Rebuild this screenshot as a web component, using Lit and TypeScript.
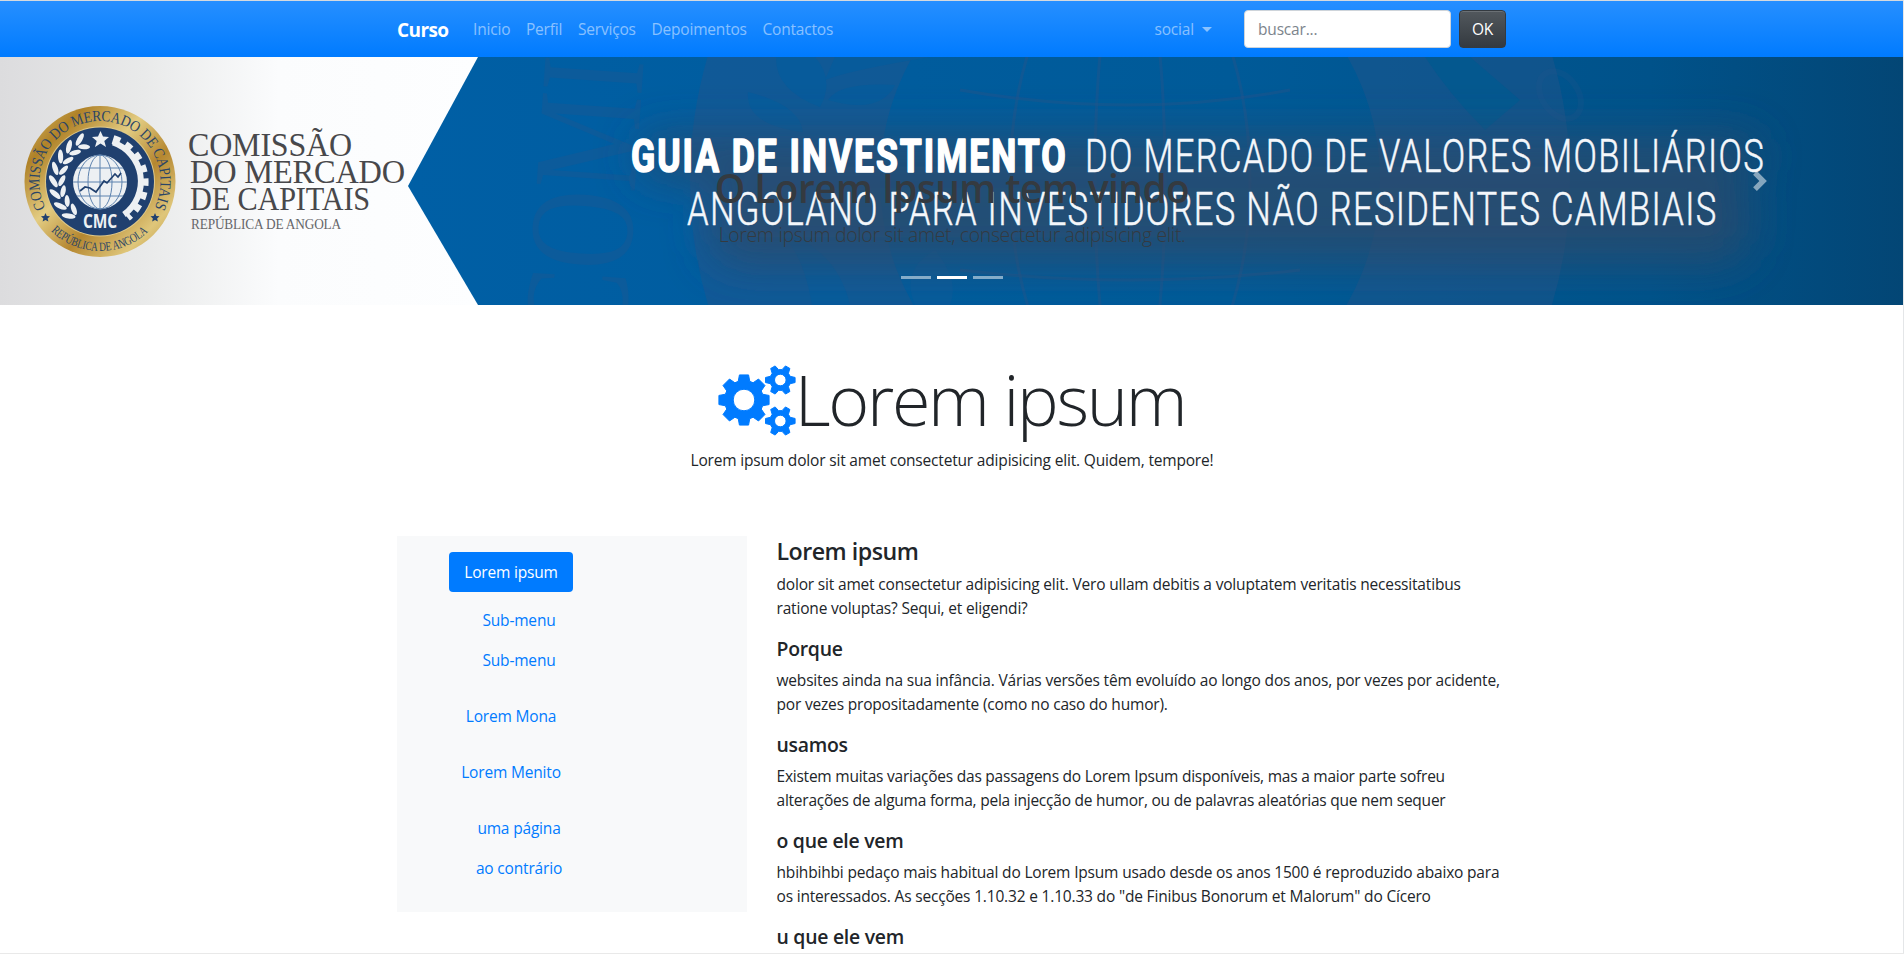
import { LitElement, html, css, svg } from "lit";
import { customElement } from "lit/decorators.js";

const links = ["Inicio", "Perfil", "Serviços", "Depoimentos", "Contactos"];

const sections = [
  { big: true, title: "Lorem ipsum", lines: ["dolor sit amet consectetur adipisicing elit. Vero ullam debitis a voluptatem veritatis necessitatibus", "ratione voluptas? Sequi, et eligendi?"] },
  { title: "Porque", lines: ["websites ainda na sua infância. Várias versões têm evoluído ao longo dos anos, por vezes por acidente,", "por vezes propositadamente (como no caso do humor)."] },
  { title: "usamos", tight: true, lines: ["Existem muitas variações das passagens do Lorem Ipsum disponíveis, mas a maior parte sofreu", "alterações de alguma forma, pela injecção de humor, ou de palavras aleatórias que nem sequer"] },
  { title: "o que ele vem", lines: ["hbihbihbi pedaço mais habitual do Lorem Ipsum usado desde os anos 1500 é reproduzido abaixo para", "os interessados. As secções 1.10.32 e 1.10.33 do \"de Finibus Bonorum et Malorum\" do Cícero"] },
  { title: "u que ele vem", lines: [] },
];

function gear(cx: number, cy: number, r: number, teeth: number, root: number, hole: number, half: number, tip: number) {
  let d = "";
  for (let i = 0; i < teeth; i++) {
    const a = (i * 2 * Math.PI) / teeth;
    const pts = [[root, -half], [r, -tip], [r, tip], [root, half]];
    for (const [rad, o] of pts) {
      d += `${d ? "L" : "M"}${(cx + rad * Math.cos(a + o)).toFixed(2)} ${(cy + rad * Math.sin(a + o)).toFixed(2)}`;
    }
  }
  d += `ZM${cx + hole} ${cy}A${hole} ${hole} 0 1 0 ${cx - hole} ${cy}A${hole} ${hole} 0 1 0 ${cx + hole} ${cy}Z`;
  return svg`<path fill-rule="evenodd" stroke="#007bff" stroke-width="1" stroke-linejoin="round" d=${d} />`;
}

const leaves = Array.from({ length: 8 }, (_, i) => -52 + i * 16);

@customElement("site-banner")
class SiteBanner extends LitElement {
  static styles = css`
    :host { display: block; height: 248px; position: relative; overflow: hidden; }
    .art { display: block; width: 1904px; height: 248px; }
    .serif { font-family: "Liberation Serif", serif; }
    .sans { font-family: "Open Sans", sans-serif; }
    .headline { font-family: "Roboto", sans-serif; font-weight: 300; font-size: 45.5px; fill: #f4f7fb; stroke: #f4f7fb; stroke-width: 0.5; stroke-linejoin: round; }
    .strong { font-weight: 700; fill: #fff; stroke: #fff; stroke-width: 1.6; }
    .ring { font-family: "Liberation Serif", serif; font-size: 15.5px; fill: #2b4566; }
    .small { font-size: 12.5px; }
    .caption { position: absolute; left: 0; right: 0; top: 107px; text-align: center; color: #343a40; }
    .caption-title { margin: 0 0 8px; font-weight: 600; font-size: 38.8px; line-height: 48px; letter-spacing: -0.55px; }
    .caption-text { margin: 0; font-weight: 300; font-size: 19.4px; line-height: 30px; letter-spacing: -0.32px; }
    .dots { position: absolute; left: 0; right: 0; bottom: 26px; display: flex; justify-content: center; gap: 6px; }
    .dot { width: 30px; height: 3px; background: #fff; opacity: 0.5; }
    .active { opacity: 1; }
    .next { position: absolute; left: 1750px; top: 114px; width: 20px; height: 20px; opacity: 0.5; }
  `;
  render() {
    return html`
      <svg class="art" viewBox="0 57 1904 248">
        <defs>
          <linearGradient id="gray"><stop offset="0" stop-color="#dcdcde" /><stop offset=".3" stop-color="#e9eaea" /><stop offset=".58" stop-color="#fbfcfd" /><stop offset="1" stop-color="#fdfeff" /></linearGradient>
          <linearGradient id="blue"><stop offset="0" stop-color="#005fa5" /><stop offset=".55" stop-color="#005a98" /><stop offset=".83" stop-color="#00528a" /><stop offset="1" stop-color="#034675" /></linearGradient>
          <linearGradient id="gold" x1="0" y1="0" x2="1" y2="1"><stop offset="0" stop-color="#dcc477" /><stop offset=".2" stop-color="#b08228" /><stop offset=".42" stop-color="#e3cc82" /><stop offset=".62" stop-color="#b58730" /><stop offset=".82" stop-color="#dfc67a" /><stop offset="1" stop-color="#b8913a" /></linearGradient>
          <filter id="soft" x="-20%" y="-80%" width="140%" height="260%"><feGaussianBlur stdDeviation="22" /></filter>
          <path id="arcTop" d="M45.6 208A60.5 60.5 0 1 1 154.4 208" />
          <path id="arcBottom" d="M51 231A70 70 0 0 0 149 231" />
          <clipPath id="field"><path d="M478 57H1904V305H478L408 186Z" /></clipPath>
        </defs>
        <rect y="57" width="480" height="248" fill="url(#gray)" />
        <path d="M478 57H1904V305H478L408 186Z" fill="url(#blue)" />
        <g clip-path="url(#field)">
          <g fill="none" stroke="#29558a" stroke-opacity=".38">
            <circle cx="1130" cy="180" r="345" stroke-width="190" />
            <ellipse cx="1130" cy="180" rx="120" ry="240" stroke-width="3" />
            <ellipse cx="1130" cy="180" rx="35" ry="240" stroke-width="3" />
            <path d="M960 90Q1130 120 1290 90M960 270Q1130 290 1300 270" stroke-width="3" />
            <ellipse cx="1560" cy="95" rx="18" ry="26" transform="rotate(-35 1560 95)" stroke-width="6" stroke-opacity=".2" />
          </g>
          <text class="serif" transform="translate(624 345) rotate(-86)" font-size="150" fill="#29558a" fill-opacity=".3" textLength="285" lengthAdjust="spacingAndGlyphs">COMI</text>
          <g fill="#075b9b">
            <path d="M776 57Q775 90 820 107Q835 80 815 57ZM748 92Q745 125 803 132Q800 105 748 92ZM828 100Q840 82 895 85Q880 115 828 100ZM825 80Q850 70 930 57H835Z" />
            <path d="M1425 57Q1450 95 1485 130L1520 100L1470 57Z" fill="#04588f" />
            <path d="M760 225Q800 232 812 305H850Q835 240 760 225ZM935 250Q900 270 915 305H950Q960 280 935 250Z" />
          </g>
          <g filter="url(#soft)" fill="#2b4a6b" fill-opacity=".8">
            <rect x="640" y="136" width="1120" height="42" rx="20" />
            <rect x="710" y="180" width="1040" height="84" rx="30" />
          </g>
        </g>
        <circle cx="100" cy="181.5" r="75.5" fill="url(#gold)" />
        <circle cx="100" cy="181.5" r="55" fill="#dfc98a" />
        <circle cx="100" cy="181.5" r="54" fill="#20406f" />
        <text class="ring"><textPath href="#arcTop" textLength="244" lengthAdjust="spacingAndGlyphs">COMISSÃO DO MERCADO DE CAPITAIS</textPath></text>
        <text class="ring small"><textPath href="#arcBottom" textLength="107" lengthAdjust="spacingAndGlyphs">REPÚBLICA DE ANGOLA</textPath></text>
        <g fill="#20406f"><path d="M45.500 213l1.300 3 3.200.200-2.400 2.200.800 3.200-2.900-1.700-2.900 1.700.800-3.200-2.400-2.200 3.200-.200z" /><path d="M155 213l1.300 3 3.200.200-2.400 2.200.800 3.200-2.900-1.700-2.900 1.700.800-3.200-2.400-2.200 3.200-.200z" /></g>
        <g fill="#edf0f3">
          ${leaves.map((a) => svg`<g transform=${`rotate(${a} 100 181.5)`}><ellipse cx="53.500" cy="178" rx="2.600" ry="7" transform="rotate(-30 53.500 178)" /><ellipse cx="62" cy="178" rx="2.500" ry="6" transform="rotate(32 62 178)" /></g>`)}
          <path d="M100.500 131l2.500 5.600 6 .400-4.700 4 1.700 6-5.500-3.400-5.500 3.400 1.700-6-4.700-4 6-.400z" />
          <circle cx="100" cy="182" r="27" />
        </g>
        <g fill="none" stroke="#edf0f3">
          <path d="M113 142.500A41 41 0 0 1 124 214.500" stroke-width="6" />
          <path d="M113 139.500A44.500 44.500 0 0 1 127 217" stroke-width="9" stroke-dasharray="7 6.200" />
        </g>
        <g fill="none" stroke="#5d82ae" stroke-width="1">
          <path d="M100 155V209M73 182H127M77 168H123M77 196H123" /><ellipse cx="100" cy="182" rx="12" ry="27" /><ellipse cx="100" cy="182" rx="22" ry="27" />
          <path d="M80 191l5-4 5 1 6 4 8-11 3 2 8-9 3 3 3-4" stroke="#20406f" stroke-width="1.700" />
        </g>
        <text class="sans" x="83" y="228" font-size="20" font-weight="700" fill="#edf0f3" textLength="34" lengthAdjust="spacingAndGlyphs">CMC</text>
        <g class="serif" fill="#48484b">
          <text x="188" y="155.500" font-size="34.500" textLength="164" lengthAdjust="spacingAndGlyphs">COMISSÃO</text>
          <text x="190" y="182.500" font-size="34" textLength="215" lengthAdjust="spacingAndGlyphs">DO MERCADO</text>
          <text x="190" y="209.500" font-size="34" textLength="180" lengthAdjust="spacingAndGlyphs">DE CAPITAIS</text>
          <text x="191" y="229" font-size="15" fill="#66666a" textLength="150" lengthAdjust="spacingAndGlyphs">REPÚBLICA DE ANGOLA</text>
        </g>
        <text class="headline strong" transform="translate(631 171.500) scale(.78 1)" textLength="557">GUIA DE INVESTIMENTO</text>
        <text class="headline" transform="translate(1085 171.500) scale(.76 1)" textLength="893">DO MERCADO DE VALORES MOBILIÁRIOS</text>
        <text class="headline" transform="translate(687 225) scale(.76 1)" textLength="1354">ANGOLANO PARA INVESTIDORES NÃO RESIDENTES CAMBIAIS</text>
      </svg>
      <div class="caption">
        <h3 class="caption-title">O Lorem Ipsum tem vindo</h3>
        <p class="caption-text">Lorem ipsum dolor sit amet, consectetur adipisicing elit.</p>
      </div>
      <div class="dots"><i class="dot"></i><i class="dot active"></i><i class="dot"></i></div>
      <svg class="next" viewBox="0 0 8 8"><path fill="#fff" d="M2.750 0l-1.500 1.500 2.500 2.500-2.500 2.500 1.500 1.500 4-4-4-4z" /></svg>
    `;
  }
}

@customElement("app-root")
class AppRoot extends LitElement {
  static styles = css`
    :host { display: block; height: 954px; overflow: hidden; position: relative; background: #fff; color: #212529; font: 15.5px/24px "Open Sans", "Noto Sans", sans-serif; letter-spacing: -0.18px; box-sizing: border-box; }
    .nav { height: 57px; box-sizing: border-box; border-top: 1px solid #d5dade; background: linear-gradient(#268fff, #007bff); }
    .inner { width: 1109px; display: flex; align-items: center; height: 56px; }
    .nav .inner, .cols { margin-left: 397px; }
    .brand { font-size: 19px; font-weight: 700; color: #fff; width: 68px; letter-spacing: -0.6px; padding-top: 1px; }
    .links { display: flex; gap: 15.7px; color: rgba(255, 255, 255, 0.5); padding-left: 8px; letter-spacing: -0.19px; }
    .social { margin-left: auto; color: rgba(255, 255, 255, 0.5); display: flex; align-items: center; gap: 8px; margin-right: 32px; }
    .caret { border: 5px solid transparent; border-top-color: currentColor; border-bottom: 0; }
    .search { box-sizing: border-box; width: 207px; height: 38px; border: 1px solid #ced4da; border-radius: 4px; background: #fff; color: #7c848c; padding: 6px 13px; }
    .ok { box-sizing: border-box; width: 47px; height: 38px; margin-left: 8px; border: 1px solid #343a40; border-radius: 4px; background: linear-gradient(#52585d, #343a40); box-shadow: inset 0 1px 0 rgba(255, 255, 255, 0.15); color: #fff; text-align: center; line-height: 36px; }
    .hero { display: flex; flex-direction: column; align-items: center; height: 231px; padding-top: 51px; box-sizing: border-box; }
    .hero-row { display: flex; height: 86px; align-items: center; }
    .gears { width: 78px; height: 80px; fill: #007bff; margin: 2px 1px 0 0; }
    .display { margin: 0 0 0 -2px; font-size: 70px; line-height: 86px; font-weight: 300; letter-spacing: -2.3px; padding-right: 1px; }
    .lead { margin: 6px 0 0; }
    .cols { width: 1110px; display: flex; gap: 29.5px; }
    .side { width: 350px; height: 376px; background: #f8f9fa; box-sizing: border-box; padding: 16px 0 0 52px; color: #007bff; }
    .item { display: block; height: 40px; line-height: 40px; box-sizing: border-box; width: 124px; text-align: center; }
    .pill { background: #007bff; color: #fff; border-radius: 4px; margin-bottom: 8px; }
    .sub { padding-left: 16px; }
    .top { margin-top: 16px; }
    .main { flex: 1; white-space: nowrap; }
    .title { margin: 0 0 7px; font-size: 19.4px; line-height: 24px; font-weight: 600; letter-spacing: -0.26px; }
    .big { font-size: 23.2px; line-height: 30px; letter-spacing: -0.5px; margin-bottom: 6px; }
    .text { margin: 0 0 17px; }
    .tight { letter-spacing: -0.23px; }
    .edge { position: absolute; right: 0; top: 0; bottom: 0; width: 1px; background: #e4e6e8; }
    .foot { position: absolute; left: 0; right: 0; bottom: 0; height: 1px; background: #e9e9e9; }
  `;
  render() {
    return html`
      <nav class="nav"><div class="inner">
        <span class="brand">Curso</span>
        <div class="links">${links.map((l) => html`<span class="link">${l}</span>`)}</div>
        <span class="social">social<i class="caret"></i></span>
        <div class="search">buscar...</div><div class="ok">OK</div>
      </div></nav>
      <site-banner></site-banner>
      <header class="hero">
        <div class="hero-row">
          <svg class="gears" viewBox="0 0 78 80">${gear(26, 40, 25.5, 8, 19.5, 10.8, 0.3, 0.18)}${gear(62.3, 20, 15, 6, 10.5, 5.8, 0.36, 0.17)}${gear(62.3, 61, 15, 6, 10.5, 5.8, 0.36, 0.17)}</svg>
          <h1 class="display">Lorem ipsum</h1>
        </div>
        <p class="lead">Lorem ipsum dolor sit amet consectetur adipisicing elit. Quidem, tempore!</p>
      </header>
      <div class="cols">
        <aside class="side">
          <a class="item pill">Lorem ipsum</a>
          <a class="item sub">Sub-menu</a>
          <a class="item sub">Sub-menu</a>
          <a class="item top">Lorem Mona</a>
          <a class="item top">Lorem Menito</a>
          <a class="item top sub">uma página</a>
          <a class="item sub">ao contrário</a>
        </aside>
        <main class="main">
          ${sections.map((s) => html`<h4 class=${s.big ? "title big" : "title"}>${s.title}</h4><p class=${s.tight ? "text tight" : "text"}>${s.lines.map((l) => html`${l}<br />`)}</p>`)}
        </main>
      </div>
      <div class="edge"></div><div class="foot"></div>
    `;
  }
}
